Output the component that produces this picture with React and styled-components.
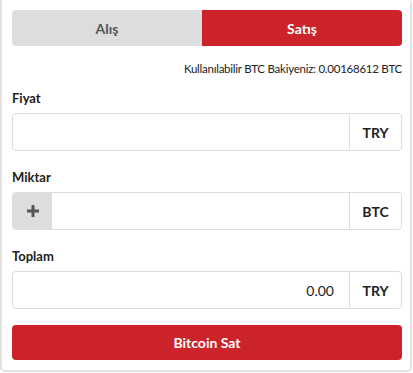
import React, { useState } from "react"
import styled, { createGlobalStyle } from "styled-components"

const GlobalStyle = createGlobalStyle`
    html, body {
        margin: 0;
        padding: 0;
        background: #fff;
    }
    body {
        font-family: Lato, "Noto Sans", sans-serif;
        color: #222;
    }
`

const Panel = styled.div`
    width: 412px;
    height: 372px;
    padding: 10px 8px 0 10px;
    border: 2px solid #e3e3e3;
    border-top: none;
    border-radius: 0 4px 5px 5px;
    background: #fff;
    box-sizing: border-box;
    display: flex;
    flex-direction: column;
`

const Tabs = styled.div`
    display: grid;
    grid-template-columns: 190fr 200fr;
    height: 36px;
    flex-shrink: 0;
    border-radius: 4px;
    overflow: hidden;
`

const Tab = styled.button`
    border: none;
    outline: none;
    font-family: inherit;
    font-size: 14px;
    font-weight: 700;
    cursor: pointer;
    background: ${(p) => (p.active ? "#cc2229" : "#dcdddf")};
    color: ${(p) => (p.active ? "#fff" : "#555")};
`

const Balance = styled.div`
    margin-top: 15px;
    text-align: right;
    font-size: 11.5px;
    letter-spacing: -0.25px;
    line-height: 16px;
    color: #222;
`

const Label = styled.div`
    margin-top: ${(p) => p.top}px;
    font-size: 13px;
    font-weight: 700;
    line-height: 16px;
    color: #222;
`

const Group = styled.div`
    margin-top: 7px;
    display: flex;
    flex-shrink: 0;
    height: 38px;
    border: 1px solid #ddd;
    border-radius: 4px;
    box-sizing: border-box;
    overflow: hidden;
`

const Field = styled.input`
    flex: 1;
    min-width: 0;
    border: none;
    outline: none;
    padding: 0 15px;
    font-family: inherit;
    font-size: 14px;
    color: #222;
    text-align: right;
    background: transparent;
`

const Addon = styled.div`
    width: 51px;
    display: flex;
    align-items: center;
    justify-content: center;
    border-left: 1px solid #ddd;
    font-size: 14px;
    font-weight: 700;
    color: #222;
`

const PlusAddon = styled.button`
    width: 39px;
    border: none;
    background: #dcdddf;
    display: flex;
    align-items: center;
    justify-content: center;
    padding: 0;
    cursor: pointer;
`

const Submit = styled.button`
    margin-top: 16px;
    height: 35px;
    flex-shrink: 0;
    border: none;
    border-radius: 4px;
    background: #cc2229;
    color: #fff;
    font-family: inherit;
    font-size: 14px;
    font-weight: 700;
    cursor: pointer;
`

function Plus() {
    return (
        <svg width="12" height="12" viewBox="0 0 12 12">
            <rect x="4.5" y="0" width="3" height="12" fill="#555" />
            <rect x="0" y="4.5" width="12" height="3" fill="#555" />
        </svg>
    )
}

export default function App() {
    const [side, setSide] = useState("sell")
    return (
        <>
            <GlobalStyle />
            <Panel>
                <Tabs>
                    <Tab active={side === "buy"} onClick={() => setSide("buy")}>Alış</Tab>
                    <Tab active={side === "sell"} onClick={() => setSide("sell")}>Satış</Tab>
                </Tabs>
                <Balance>Kullanılabilir BTC Bakiyeniz: 0.00168612 BTC</Balance>

                <Label top={13}>Fiyat</Label>
                <Group>
                    <Field />
                    <Addon>TRY</Addon>
                </Group>

                <Label top={18}>Miktar</Label>
                <Group>
                    <PlusAddon><Plus /></PlusAddon>
                    <Field />
                    <Addon>BTC</Addon>
                </Group>

                <Label top={18}>Toplam</Label>
                <Group>
                    <Field defaultValue="0.00" />
                    <Addon>TRY</Addon>
                </Group>

                <Submit>Bitcoin Sat</Submit>
            </Panel>
        </>
    )
}
